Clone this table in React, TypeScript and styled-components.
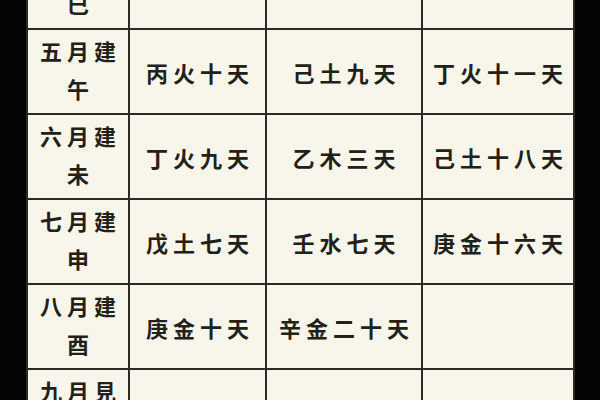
import React from "react";
import styled, { createGlobalStyle } from "styled-components";

const Global = createGlobalStyle`
  html, body { margin: 0; padding: 0; background: #050505; }
  #root { width: 600px; height: 400px; overflow: hidden; }
`;

const Frame = styled.div`
  width: 600px;
  height: 400px;
  overflow: hidden;
  background: #050505;
  padding-left: 26px;
  box-sizing: border-box;
`;

const Table = styled.div`
  display: grid;
  grid-template-columns: 100px 135px 154px 150px;
  grid-auto-rows: 83px;
  gap: 2px;
  padding: 2px;
  background: #2b2a25;
  width: max-content;
  margin-top: -57px;
`;

const Cell = styled.div`
  background: #f8f5ea;
  display: flex;
  align-items: center;
  justify-content: center;
  font-family: "Noto Sans CJK SC", "Noto Sans CJK TC", sans-serif;
  font-weight: 700;
  font-size: 22px;
  color: #222119;
  letter-spacing: 5px;
  padding-left: 5px;
  box-sizing: border-box;
`;

const MonthCell = styled(Cell)`
  flex-direction: column;
  line-height: 38px;
  padding-bottom: 6px;
`;

const Line = styled.span`
  display: block;
  white-space: nowrap;
`;

type Row = { month: string; branch: string; cells: string[] };

const rows: Row[] = [
  { month: "四月建", branch: "巳", cells: ["戊土五天", "庚金九天", "丙火十六天"] },
  { month: "五月建", branch: "午", cells: ["丙火十天", "己土九天", "丁火十一天"] },
  { month: "六月建", branch: "未", cells: ["丁火九天", "乙木三天", "己土十八天"] },
  { month: "七月建", branch: "申", cells: ["戊土七天", "壬水七天", "庚金十六天"] },
  { month: "八月建", branch: "酉", cells: ["庚金十天", "辛金二十天", ""] },
  { month: "九月見", branch: "戌", cells: ["辛金九天", "丁火三天", "戊土十八天"] },
];

export default function App() {
  return (
    <>
      <Global />
      <Frame>
        <Table>
          {rows.map((r) => (
            <React.Fragment key={r.month}>
              <MonthCell>
                <Line>{r.month}</Line>
                <Line>{r.branch}</Line>
              </MonthCell>
              {r.cells.map((c, i) => (
                <Cell key={i}>{c}</Cell>
              ))}
            </React.Fragment>
          ))}
        </Table>
      </Frame>
    </>
  );
}
